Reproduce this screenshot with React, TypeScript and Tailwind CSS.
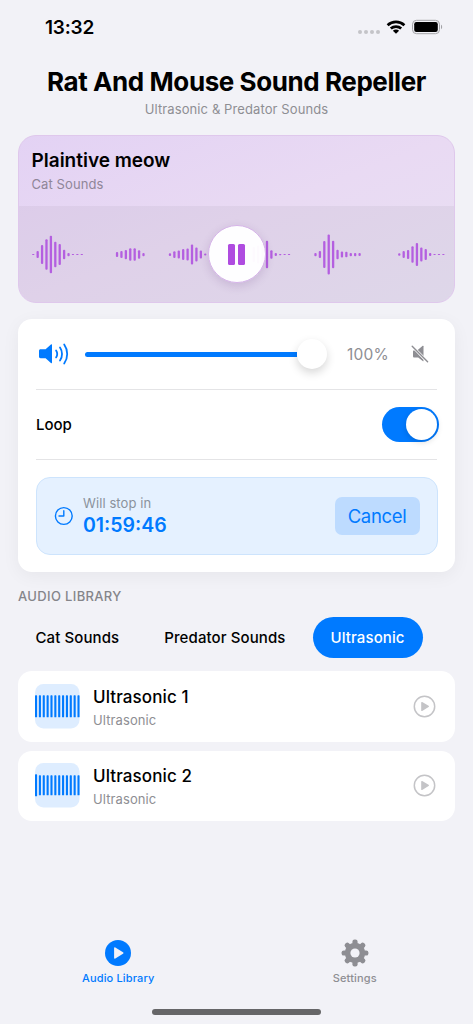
import { useState } from "react";
import type { ReactNode } from "react";

const categories = ["Cat Sounds", "Predator Sounds", "Ultrasonic"];

const tracks = [
  { id: 1, title: "Ultrasonic 1", category: "Ultrasonic", first: 22, rest: 22 },
  { id: 2, title: "Ultrasonic 2", category: "Ultrasonic", first: 22, rest: 20 },
];

// start = index of the first bar, then the bar heights
const waveGroups = [
  { start: 0, bars: [1, 7, 19, 30.5, 37.5, 25.5, 21, 9.5, 3.3, 1, 1, 1] },
  { start: 19, bars: [5, 7, 9.3, 12.5, 12.5, 8.5, 3.3] },
  { start: 31, bars: [2.7, 6.7, 8, 11, 12, 20, 14, 8, 2] },
  { start: 50, bars: [15, 18, 22, 27.5, 8.5, 3, 1.3, 1, 1] },
  { start: 64, bars: [3.3, 7, 27, 40, 27.5, 9.5, 6, 5.5, 3.3, 3.3, 3] },
  { start: 83, bars: [2.5, 7, 9, 16.5, 23, 14, 11, 3, 1, 1, 1] },
];

function StatusBar() {
  return (
    <div className="flex h-[54px] items-center justify-between pl-[45px] pr-[30px]">
      <span className="text-[19px] font-semibold leading-none tracking-[-0.2px]">
        13:32
      </span>
      <svg width="86" height="18" viewBox="0 0 86 18">
        <g fill="#c4c4c8">
          <circle cx="3" cy="14" r="2" />
          <circle cx="9" cy="14" r="2" />
          <circle cx="15" cy="14" r="2" />
          <circle cx="21" cy="14" r="2" />
        </g>
        <g fill="none" stroke="#000" strokeWidth="2.7">
          <path d="M30.6 7.2a12.3 12.3 0 0 1 16.8 0" />
          <path d="M33.8 10.6a7.6 7.6 0 0 1 10.4 0" />
        </g>
        <path d="M35.9 12.7a4.4 4.4 0 0 1 6.2 0L39 15.8z" />
        <rect
          x="55.5"
          y="2.3"
          width="27"
          height="13.4"
          rx="4"
          fill="none"
          stroke="#a3a3a7"
        />
        <rect x="57.2" y="4" width="23.6" height="10" rx="2.2" />
        <path d="M84 6.8c1.5.5 1.5 3.9 0 4.4z" fill="#a3a3a7" />
      </svg>
    </div>
  );
}

function Waveform() {
  return (
    <svg
      className="ml-[3px]"
      width="413"
      height="44"
      viewBox="0 0 413 44"
      fill="#b45fe0"
    >
      {waveGroups.map((group) =>
        group.bars.map((h, i) => (
          <rect
            key={group.start + i}
            x={0.1 + (group.start + i) * 4.41}
            y={21.6 - h / 2}
            width="2.3"
            height={h}
            rx={Math.min(1, h / 2)}
          />
        ))
      )}
    </svg>
  );
}

function Player() {
  return (
    <section className="mx-[18px] h-[168px] overflow-hidden rounded-[18px] border border-[#dfc8ec] bg-linear-to-br from-[#e3d2f4] via-[#e9daf3] to-[#e8e0f3]">
      <div className="h-[70px] px-[12.5px] pt-[13px]">
        <h2 className="text-[19px] font-semibold leading-6">Plaintive meow</h2>
        <p className="mt-[3px] text-[13px] leading-4 tracking-[0.1px] text-[#8f8699]">
          Cat Sounds
        </p>
      </div>
      <div className="relative flex h-[97px] items-center justify-center bg-black/4">
        <Waveform />
        <button className="absolute left-[188.5px] top-[19px] flex size-[58px] items-center justify-center gap-[3px] rounded-full border border-[#d5b3e8] bg-white/97 shadow-[0_3px_10px_rgba(80,40,110,0.16)]">
          <span className="h-[21px] w-[7px] rounded-[1.5px] bg-[#af4ce0]" />
          <span className="h-[21px] w-[7px] rounded-[1.5px] bg-[#af4ce0]" />
        </button>
      </div>
    </section>
  );
}

function VolumeRow() {
  return (
    <div className="flex h-[70px] items-center">
      <svg
        className="ml-[2px] shrink-0"
        width="32"
        height="24"
        viewBox="0 0 32 24"
        fill="none"
        stroke="#007aff"
        strokeWidth="1.8"
        strokeLinecap="round"
      >
        <path
          d="M2.6 7.3h5l5.3-4.7c.6-.5 1.1-.3 1.1.4v17.6c0 .7-.5.9-1.1.4l-5.3-4.8h-5C1.6 16.2 1 15.6 1 14.6V8.9c0-1 .6-1.6 1.6-1.6z"
          fill="#007aff"
          stroke="none"
        />
        <path d="M18.1 8.4c1.3 2 1.3 5 0 7" />
        <path d="M22 5.4c2.7 3.8 2.7 9.4 0 13.2" />
        <path d="M26.2 2.5c4 5.6 4 13.4 0 19" />
      </svg>
      <div className="ml-[15px] flex h-[30px] w-[243px] shrink-0 items-center">
        <div className="h-[5px] flex-1 rounded-l-full bg-[#007aff]" />
        <div className="mr-px size-[30px] rounded-full bg-white shadow-[0_4px_10px_rgba(0,0,0,0.16)]" />
      </div>
      <span className="ml-[19px] w-[50px] pt-px text-[15.5px] tracking-[0.2px] text-[#8e8e93]">
        100%
      </span>
      <svg
        className="ml-[14px]"
        width="18"
        height="18"
        viewBox="0 0 18 18"
        fill="#8e8e93"
      >
        <path d="M2.4 5.6h1.3l8.8 9.2v1c0 .5-.4.7-.8.3L7.2 12.5H3.4c-.9 0-1.4-.4-1.4-1.2V6.4c0-.5.1-.8.4-.8z" />
        <path d="m6.4 5.3 5.3-4.5c.4-.3.8-.1.8.4v10.2z" />
        <path
          d="M1.2 1.2 16.6 16.7"
          stroke="#fff"
          strokeWidth="2.6"
          strokeLinecap="round"
        />
        <path
          d="M1.2 1.2 16.6 16.7"
          stroke="#8e8e93"
          strokeWidth="1.4"
          strokeLinecap="round"
        />
      </svg>
    </div>
  );
}

function Controls() {
  const [loop, setLoop] = useState(true);

  return (
    <section className="mx-[18px] mt-4 h-[253px] rounded-[14px] bg-white px-[18px] shadow-[0_4px_18px_rgba(0,0,0,0.05)]">
      <VolumeRow />
      <div className="h-px bg-[#e4e4e6]" />
      <div className="-mr-[2px] flex h-[69px] items-center justify-between">
        <span className="pt-[2px] text-[15px] font-medium">Loop</span>
        <button
          onClick={() => setLoop(!loop)}
          className={`flex h-[35px] w-[57px] items-center rounded-full px-[2px] ${
            loop ? "justify-end bg-[#007aff]" : "justify-start bg-[#e9e9ea]"
          }`}
        >
          <span className="size-[31px] rounded-full bg-white shadow-[0_2px_6px_rgba(0,0,0,0.15)]" />
        </button>
      </div>
      <div className="h-px bg-[#e4e4e6]" />
      <div className="-mx-[0.5px] mt-[17px] flex h-[78px] items-center rounded-[14px] border border-[#cde4fd] bg-[#e5f1ff] px-[17px]">
        <svg
          width="20"
          height="20"
          viewBox="0 0 20 20"
          fill="none"
          stroke="#007aff"
          strokeWidth="1.4"
          strokeLinecap="round"
          strokeLinejoin="round"
        >
          <circle cx="9.8" cy="10" r="8.4" />
          <path d="M9.8 4.7V10H5" />
        </svg>
        <div className="ml-[9.5px] flex-1">
          <p className="text-[13px] leading-4 tracking-[0.1px] text-[#8a929c]">
            Will stop in
          </p>
          <p className="mt-[2px] text-[19.5px] font-semibold leading-6 text-[#007aff]">
            01:59:46
          </p>
        </div>
        <button className="h-[38px] w-[85px] rounded-[7px] bg-[#bddbff] pt-px text-[18.5px] tracking-[-0.35px] text-[#007aff]">
          Cancel
        </button>
      </div>
    </section>
  );
}

function CategoryTabs() {
  const [active, setActive] = useState("Ultrasonic");

  return (
    <div className="mt-[13px] flex h-[41px] gap-[9px] px-[17.5px]">
      {categories.map((name) => (
        <button
          key={name}
          onClick={() => setActive(name)}
          className={`whitespace-nowrap rounded-full px-[18px] pt-px text-[15px] font-medium tracking-[0.1px] ${
            active === name ? "bg-[#007aff] text-white" : ""
          }`}
        >
          {name}
        </button>
      ))}
    </div>
  );
}

function TrackThumb({ first, rest }: { first: number; rest: number }) {
  return (
    <svg width="45" height="45" viewBox="0 0 45 45">
      <rect width="44.5" height="44.5" rx="8.5" fill="#deedff" />
      {Array.from({ length: 12 }, (_, i) => {
        const h = i === 0 ? first : rest;
        return (
          <rect
            key={i}
            x={i * 3.86}
            y={22.3 - h / 2}
            width="2.1"
            height={h}
            rx="0.6"
            fill="#007aff"
          />
        );
      })}
    </svg>
  );
}

function TrackList() {
  return (
    <ul className="mx-[18px] mt-[13px] space-y-[9px]">
      {tracks.map((track) => (
        <li
          key={track.id}
          className="flex h-[70.5px] items-center rounded-[14px] bg-white pl-[17px] pr-[19px]"
        >
          <TrackThumb first={track.first} rest={track.rest} />
          <div className="ml-[13px] flex-1">
            <p className="text-[17px] font-medium leading-6 tracking-[0.1px]">
              {track.title}
            </p>
            <p className="mt-[3px] text-[13px] leading-4 tracking-[0.1px] text-[#8e8e93]">
              {track.category}
            </p>
          </div>
          <svg width="23" height="23" viewBox="0 0 23 23" fill="#c4c4c7">
            <circle
              cx="11.5"
              cy="11.5"
              r="10.2"
              fill="none"
              stroke="#c4c4c7"
              strokeWidth="1.5"
            />
            <path d="M8.2 7.6c0-.6.5-.8 1-.5l6.4 3.7c.5.3.5 1 0 1.3l-6.4 3.8c-.5.3-1 .1-1-.5z" />
          </svg>
        </li>
      ))}
    </ul>
  );
}

function TabItem({
  label,
  color,
  children,
}: {
  label: string;
  color: string;
  children: ReactNode;
}) {
  return (
    <button className={`flex flex-1 flex-col items-center ${color}`}>
      <svg width="28" height="28" viewBox="-14 -14 28 28" fill="currentColor">
        {children}
      </svg>
      <span className="mt-[3px] text-[11px] font-medium leading-4 tracking-[0.15px]">
        {label}
      </span>
    </button>
  );
}

function TabBar() {
  return (
    <nav className="mt-auto h-[85px]">
      <div className="flex">
        <TabItem label="Audio Library" color="text-[#007aff]">
          <circle r="13" />
          <path
            d="M-3.9-5c0-.7.6-1 1.2-.6l7.7 4.8c.6.4.6 1.2 0 1.6l-7.7 4.8c-.6.4-1.2.1-1.2-.6z"
            fill="#f2f2f7"
          />
        </TabItem>
        <TabItem label="Settings" color="text-[#8e8e93]">
          {[0, 45, 90, 135].map((deg) => (
            <rect
              key={deg}
              x="-2.6"
              y="-13.4"
              width="5.2"
              height="26.8"
              rx="2.2"
              transform={`rotate(${deg})`}
            />
          ))}
          <circle r="10.2" />
          <circle r="4.6" fill="#f2f2f7" />
        </TabItem>
      </div>
      <div className="mx-auto mt-[23px] h-[5.5px] w-[169px] rounded-full bg-[#666668]" />
    </nav>
  );
}

export default function App() {
  return (
    <main className="flex h-[1024px] w-[473px] flex-col overflow-hidden bg-[#f2f2f7] font-['Inter','Liberation_Sans',sans-serif] text-black">
      <StatusBar />
      <header className="flex h-[81px] flex-col items-center pt-[12px]">
        <h1 className="whitespace-nowrap text-[26px] font-bold leading-8 tracking-[-0.42px]">
          Rat And Mouse Sound Repeller
        </h1>
        <p className="mt-[3px] text-[13px] leading-4 tracking-[0.1px] text-[#8e8e93]">
          Ultrasonic &amp; Predator Sounds
        </p>
      </header>
      <Player />
      <Controls />
      <h3 className="mt-[16px] pl-[18px] text-[13px] font-medium leading-4 tracking-[0.35px] text-[#85858a]">
        AUDIO LIBRARY
      </h3>
      <CategoryTabs />
      <TrackList />
      <TabBar />
    </main>
  );
}
